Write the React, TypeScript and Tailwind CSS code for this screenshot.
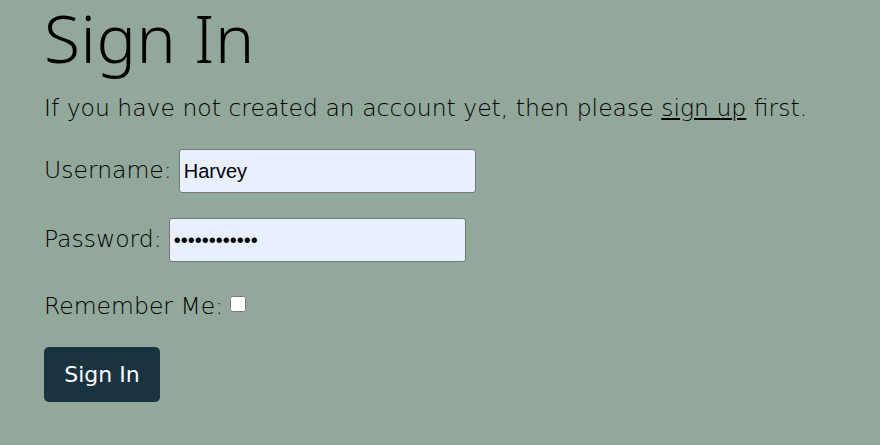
import React from 'react';

const bodyFont = { fontFamily: '"DejaVu Sans", "Noto Sans", sans-serif' };

export default function App() {
  return (
    <div className="min-h-[445px] w-full bg-[#91a89a] text-black">
      <div className="px-[44px]">
        {/* Heading */}
        <h1 className="text-[66px] leading-[74px] font-light tracking-[0.5px] font-['Noto_Sans',sans-serif]">Sign In</h1>

        <p className="mt-[19px] text-[23.5px] leading-[30px] font-extralight font-['DejaVu_Sans',sans-serif]">
          If you have not created an account yet, then please{' '}
          <a href="#" className="underline">sign up</a> first.
        </p>

        <form className="mt-[26px] flex flex-col font-['DejaVu_Sans',sans-serif] font-extralight" onSubmit={(e) => e.preventDefault()}>
          {/* Username */}
          <div className="flex items-center gap-[7px]">
            <label htmlFor="username" className="text-[23.5px]">Username:</label>
            <input
              id="username"
              type="text"
              defaultValue="Harvey"
              className="h-[44px] w-[297px] rounded-[3px] border border-[#767676] bg-[#e8f0fe] px-[4px] text-[20px] font-normal font-['Liberation_Sans',sans-serif] outline-none"
            />
          </div>

          {/* Password */}
          <div className="mt-[25px] flex items-center gap-[7px]">
            <label htmlFor="password" className="text-[23.5px]">Password:</label>
            <input
              id="password"
              type="password"
              defaultValue="Harvey123456"
              className="h-[44px] w-[297px] rounded-[3px] border border-[#767676] bg-[#e8f0fe] px-[4px] text-[20px] font-normal font-['Liberation_Sans',sans-serif] outline-none"
            />
          </div>

          {/* Remember me */}
          <div className="mt-[27px] flex items-center gap-[7px]">
            <label htmlFor="remember" className="text-[23.5px]">Remember Me:</label>
            <input id="remember" type="checkbox" className="h-[16px] w-[16px] -mt-[6px]" />
          </div>

          <div className="mt-[23px]">
            <button
              type="submit"
              className="h-[55px] w-[116px] rounded-[5px] bg-[#1a3340] text-[22px] font-normal text-white"
              style={bodyFont}
            >
              Sign In
            </button>
          </div>
        </form>
      </div>
    </div>
  );
}
